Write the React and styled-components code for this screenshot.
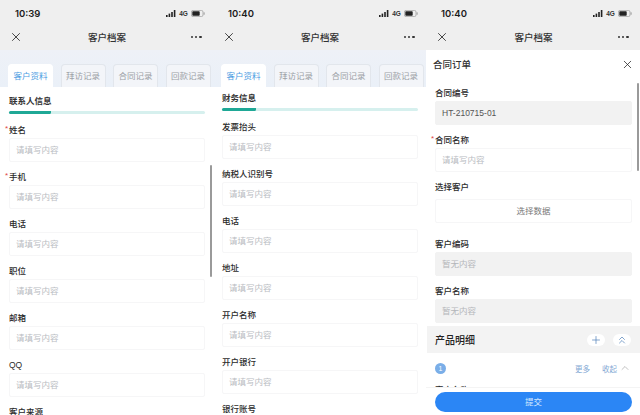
import React from 'react'
import styled, { createGlobalStyle } from 'styled-components'
import { X, Plus, ChevronsUp, ChevronUp } from 'lucide-react'

const GlobalStyle = createGlobalStyle`
  html, body {
    margin: 0;
    padding: 0;
    background: #fff;
  }
  * {
    box-sizing: border-box;
  }
`

const contactFields = [
  { label: '姓名', required: true },
  { label: '手机', required: true },
  { label: '电话' },
  { label: '职位' },
  { label: '邮箱' },
  { label: 'QQ' },
  { label: '客户来源' },
]

const financeFields = [
  { label: '发票抬头' },
  { label: '纳税人识别号' },
  { label: '电话' },
  { label: '地址' },
  { label: '开户名称' },
  { label: '开户银行' },
  { label: '银行账号' },
]

const tabs = ['客户资料', '拜访记录', '合同记录', '回款记录']

const StatusIcons = () => (
  <StatusRight>
    <svg width="10" height="7" viewBox="0 0 10 7">
      <rect x="0" y="5" width="1.6" height="2" fill="#222" />
      <rect x="2.6" y="3.6" width="1.6" height="3.4" fill="#222" />
      <rect x="5.2" y="2" width="1.6" height="5" fill="#222" />
      <rect x="7.8" y="0" width="1.6" height="7" fill="#222" />
    </svg>
    <NetworkText>4G</NetworkText>
    <svg width="14" height="7" viewBox="0 0 14 7">
      <rect x="0.4" y="0.4" width="11.6" height="6.2" rx="1.6" fill="none" stroke="#999" strokeWidth="0.7" />
      <rect x="1.3" y="1.3" width="7.4" height="4.4" rx="0.8" fill="#222" />
      <rect x="12.6" y="2.3" width="1" height="2.4" rx="0.5" fill="#999" />
    </svg>
  </StatusRight>
)

const TopBar = ({ time }) => (
  <TopArea>
    <StatusBar>
      <Time>{time}</Time>
      <StatusIcons />
    </StatusBar>
    <NavBar>
      <X size={14} strokeWidth={1.4} color="#222" />
      <NavTitle>客户档案</NavTitle>
      <Dots>
        <i />
        <i />
        <i />
      </Dots>
    </NavBar>
  </TopArea>
)

const TabBar = () => (
  <Tabs>
    {tabs.map((t, i) => (
      <Tab key={t} $active={i === 0}>{t}</Tab>
    ))}
  </Tabs>
)

const Field = ({ label, required }) => (
  <FieldWrap>
    <Label $required={required}>{label}</Label>
    <Input>请填写内容</Input>
  </FieldWrap>
)

const FormPhone = ({ time, title, progress, compact, fields, scrollbar }) => (
  <Phone>
    <TopBar time={time} />
    <TabBar />
    <Content $compact={compact}>
      <SectionTitle>{title}</SectionTitle>
      <Track>
        <TrackFill style={{ width: progress }} />
      </Track>
      {fields.map((f) => (
        <Field key={f.label} {...f} />
      ))}
    </Content>
    {scrollbar && <Scrollbar $top={165} $height={112} />}
  </Phone>
)

const ContractPhone = () => (
  <Phone>
    <TopBar time="10:40" />
    <Sheet>
      <SheetHeader>
        <SheetTitle>合同订单</SheetTitle>
        <X size={13} strokeWidth={1.4} color="#222" />
      </SheetHeader>
      <FieldWrap>
        <Label>合同编号</Label>
        <Input $filled>HT-210715-01</Input>
      </FieldWrap>
      <FieldWrap>
        <Label $required>合同名称</Label>
        <Input>请填写内容</Input>
      </FieldWrap>
      <FieldWrap $spaced>
        <Label>选择客户</Label>
        <PickButton>选择数据</PickButton>
      </FieldWrap>
      <FieldWrap>
        <Label>客户编码</Label>
        <Input $disabled>暂无内容</Input>
      </FieldWrap>
      <FieldWrap $tight>
        <Label>客户名称</Label>
        <Input $disabled>暂无内容</Input>
      </FieldWrap>
      <ProductBand>
        <ProductTitle>产品明细</ProductTitle>
        <BandActions>
          <RoundAction><Plus size={12} strokeWidth={1.4} /></RoundAction>
          <RoundAction><ChevronsUp size={12} strokeWidth={1.4} /></RoundAction>
        </BandActions>
      </ProductBand>
      <ProductRow>
        <IndexBadge>1</IndexBadge>
        <RowActions>
          <span>更多</span>
          <Collapse>
            收起
            <ChevronUp size={12} strokeWidth={1.2} />
          </Collapse>
        </RowActions>
      </ProductRow>
      <Label>客户名称</Label>
    </Sheet>
    <Footer>
      <SubmitButton>提交</SubmitButton>
    </Footer>
    <Scrollbar $top={83} $height={88} />
  </Phone>
)

const App = () => (
  <>
    <GlobalStyle />
    <Page>
      <FormPhone time="10:39" title="联系人信息" progress={42} fields={contactFields} scrollbar />
      <FormPhone time="10:40" title="财务信息" progress={34} fields={financeFields} compact />
      <ContractPhone />
    </Page>
  </>
)

const Page = styled.div`
  display: grid;
  grid-template-columns: 213px 213px 214px;
  width: 640px;
  height: 415px;
  overflow: hidden;
  font-family: "Liberation Sans", "Noto Sans CJK SC", sans-serif;
  color: #2b2b2b;
`
const Phone = styled.div`
  position: relative;
  display: flex;
  flex-direction: column;
  height: 415px;
  overflow: hidden;
  background: #fff;
`
const TopArea = styled.div`
  flex: none;
  height: 50px;
  background: #efefef;
`
const StatusBar = styled.div`
  display: flex;
  align-items: center;
  justify-content: space-between;
  height: 26px;
  padding: 0 8px 0 15px;
`
const Time = styled.span`
  font-family: "Inter", "Liberation Sans", sans-serif;
  font-size: 9.5px;
  font-weight: 600;
  color: #1c1c1c;
`
const StatusRight = styled.div`
  display: flex;
  align-items: center;
  gap: 2px;
`
const NetworkText = styled.span`
  font-size: 6.5px;
  font-weight: 700;
  color: #333;
  width: 11px;
  text-align: center;
`
const NavBar = styled.div`
  display: flex;
  align-items: center;
  justify-content: space-between;
  height: 22px;
  padding: 0 11px 0 9px;
`
const NavTitle = styled.span`
  font-size: 9.5px;
  font-weight: 500;
  color: #333;
`
const Dots = styled.div`
  display: flex;
  gap: 2px;
  width: 11px;

  i {
    display: block;
    width: 2.2px;
    height: 2.2px;
    border-radius: 50%;
    background: #333;
  }
`
const Tabs = styled.div`
  flex: none;
  display: flex;
  gap: 7.5px;
  height: 37px;
  padding: 14px 0 0 8px;
  background: linear-gradient(#eef1f7, #eaf0f8);
`
const Tab = styled.div`
  width: 45px;
  height: 23px;
  border: 1px solid ${(p) => (p.$active ? '#fff' : '#e2e6ec')};
  border-bottom: none;
  border-radius: 4px 4px 0 0;
  background: ${(p) => (p.$active ? '#fff' : '#f3f5f9')};
  color: ${(p) => (p.$active ? '#4c9ce2' : '#9b9fa6')};
  font-size: 8.5px;
  line-height: 22px;
  text-align: center;
`
const Content = styled.div`
  flex: 1;
  min-height: 0;
  padding: ${(p) => (p.$compact ? '4px' : '7px')} 8px 0 9px;
  background: #fff;
`
const SectionTitle = styled.div`
  height: 14px;
  font-size: 8.5px;
  font-weight: 700;
  line-height: 14px;
  color: #333;
`
const Track = styled.div`
  height: 3px;
  margin: 3px 0 7px;
  border-radius: 2px;
  background: #d6f0ee;
`
const TrackFill = styled.div`
  height: 100%;
  border-radius: 2px 0 2px 2px;
  background: #1fa896;
`
const FieldWrap = styled.div`
  margin-bottom: ${(p) => (p.$spaced ? '12px' : p.$tight ? '3px' : '6px')};
`
const Label = styled.div`
  position: relative;
  height: 17px;
  font-size: 8.5px;
  font-weight: 500;
  line-height: 18px;
  color: #2b2b2b;

  ${(p) => p.$required && `
    &::before {
      content: '*';
      position: absolute;
      left: -4px;
      top: -1px;
      color: #e0433f;
      font-size: 8px;
    }
  `}
`
const Input = styled.div`
  height: 24px;
  padding-left: 6px;
  border: 1px solid ${(p) => (p.$filled || p.$disabled ? '#f2f2f2' : '#f6f6f7')};
  border-radius: 2px;
  background: ${(p) => (p.$filled || p.$disabled ? '#f2f2f2' : '#fff')};
  color: ${(p) => (p.$filled ? '#555' : p.$disabled ? '#b4b6ba' : '#b9bcc2')};
  font-size: 8.5px;
  line-height: 22px;
`
const PickButton = styled.div`
  height: 24px;
  margin-top: 4px;
  border: 1px solid #f6f6f7;
  border-radius: 2px;
  color: #777;
  font-size: 8.5px;
  line-height: 22px;
  text-align: center;
`
const Sheet = styled.div`
  flex: 1;
  min-height: 0;
  overflow: hidden;
  padding: 0 8px 0 9px;
  background: #fff;
`
const SheetHeader = styled.div`
  display: flex;
  align-items: center;
  justify-content: space-between;
  height: 34px;
  margin: 0 -2px 0 -2px;
  padding: 0 0 6px 0;
`
const SheetTitle = styled.span`
  font-size: 9.5px;
  font-weight: 500;
  color: #333;
`
const ProductBand = styled.div`
  display: flex;
  align-items: center;
  justify-content: space-between;
  height: 27px;
  margin: 0 -8px 0 -8px;
  padding: 0 9px 0 8px;
  background: #f3f3f3;
`
const ProductTitle = styled.span`
  font-size: 10px;
  font-weight: 500;
  color: #222;
`
const BandActions = styled.div`
  display: flex;
  gap: 8px;
`
const RoundAction = styled.div`
  display: flex;
  align-items: center;
  justify-content: center;
  width: 18px;
  height: 12px;
  border-radius: 6px;
  background: #fff;
  color: #4f7fb8;
`
const ProductRow = styled.div`
  display: flex;
  align-items: center;
  justify-content: space-between;
  height: 26px;
  margin-top: 2px;
`
const IndexBadge = styled.div`
  width: 11px;
  height: 11px;
  border-radius: 50%;
  background: #7aaee8;
  color: #fff;
  font-size: 7px;
  line-height: 11px;
  text-align: center;
`
const RowActions = styled.div`
  display: flex;
  align-items: center;
  gap: 12px;
  padding-right: 1px;
  color: #7fa8d4;
  font-size: 7.5px;
`
const Collapse = styled.span`
  display: flex;
  align-items: center;
  gap: 2px;

  svg {
    color: #999;
  }
`
const Footer = styled.div`
  flex: none;
  height: 28px;
  padding: 4px 8px 4px 9px;
  border-top: 1px solid #f4f4f4;
  background: #fff;
`
const SubmitButton = styled.div`
  height: 20px;
  border-radius: 10px;
  background: #2b86f5;
  color: #d6e8ff;
  font-size: 8.5px;
  line-height: 20px;
  text-align: center;
`
const Scrollbar = styled.div`
  position: absolute;
  right: 1px;
  top: ${(p) => p.$top}px;
  width: 2px;
  height: ${(p) => p.$height}px;
  border-radius: 1px;
  background: #9a9a9a;
`

export default App
